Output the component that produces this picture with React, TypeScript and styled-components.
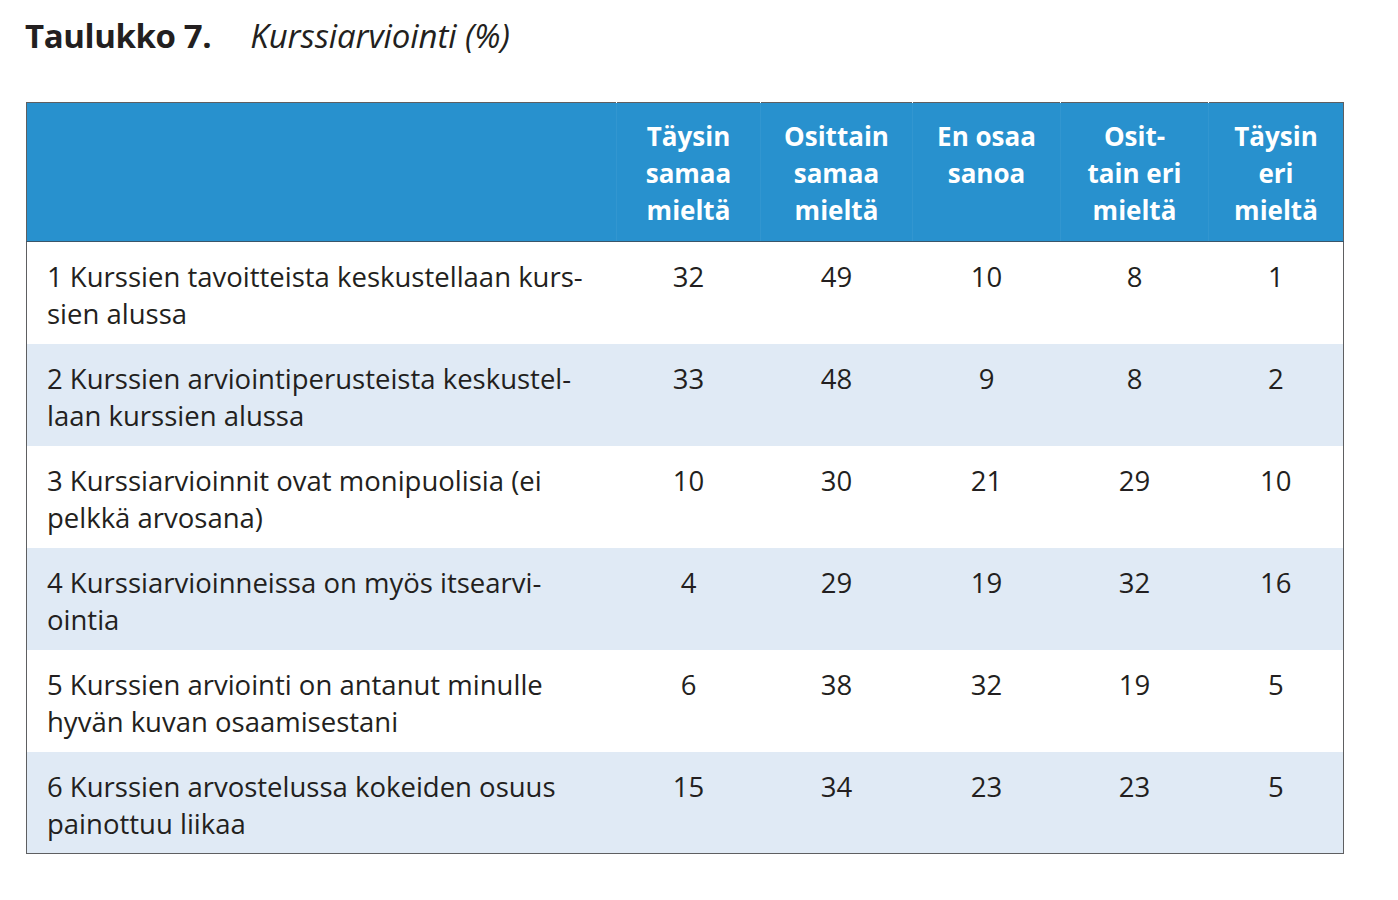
import { createGlobalStyle, styled } from 'styled-components';
import * as React from 'react';

const GlobalStyle = createGlobalStyle`
  html, body {
    margin: 0;
    padding: 0;
    background: #ffffff;
  }
  body {
    font-family: 'Open Sans', 'Noto Sans', sans-serif;
    color: #231f20;
  }
`;

interface IRow {
  label: string;
  values: number[];
}

const headers = ['Täysin\nsamaa\nmieltä', 'Osittain\nsamaa\nmieltä', 'En osaa\nsanoa', 'Osit-\ntain eri\nmieltä', 'Täysin\neri\nmieltä'];

const rows: IRow[] = [
  { label: '1 Kurssien tavoitteista keskustellaan kurs-\nsien alussa', values: [32, 49, 10, 8, 1] },
  { label: '2 Kurssien arviointiperusteista keskustel-\nlaan kurssien alussa', values: [33, 48, 9, 8, 2] },
  { label: '3 Kurssiarvioinnit ovat monipuolisia (ei\npelkkä arvosana)', values: [10, 30, 21, 29, 10] },
  { label: '4 Kurssiarvioinneissa on myös itsearvi-\nointia', values: [4, 29, 19, 32, 16] },
  { label: '5 Kurssien arviointi on antanut minulle\nhyvän kuvan osaamisestani', values: [6, 38, 32, 19, 5] },
  { label: '6 Kurssien arvostelussa kokeiden osuus\npainottuu liikaa', values: [15, 34, 23, 23, 5] },
];

const columnWidths = [590, 144, 152, 148, 148, 135];

const App: React.FC = () => {
  return (
    <Page>
      <GlobalStyle />
      <Title>
        <TitleNumber>Taulukko 7.</TitleNumber>
        <TitleName>Kurssiarviointi (%)</TitleName>
      </Title>
      <Table>
        <colgroup>
          {columnWidths.map((w, i) => (
            <col key={i} style={{ width: w }} />
          ))}
        </colgroup>
        <thead>
          <tr>
            <HeadCell />
            {headers.map((h) => (
              <HeadCell key={h} $divided>
                {h}
              </HeadCell>
            ))}
          </tr>
        </thead>
        <tbody>
          {rows.map((row, i) => (
            <BodyRow key={row.label} $striped={i % 2 === 1}>
              <LabelCell>{row.label}</LabelCell>
              {row.values.map((v, j) => (
                <ValueCell key={j}>{v}</ValueCell>
              ))}
            </BodyRow>
          ))}
        </tbody>
      </Table>
    </Page>
  );
};

const Page = styled.div`
  padding: 15px 0 0 26px;
  width: 1317px;
`;

const Title = styled.h1`
  margin: 0 0 45px -1px;
  display: flex;
  gap: 39px;
  font-size: 33px;
  line-height: 42px;
  font-weight: 400;
  color: #231f20;
`;

const TitleNumber = styled.span`
  font-weight: 700;
  letter-spacing: -0.4px;
`;

const TitleName = styled.span`
  font-style: italic;
  letter-spacing: -0.1px;
`;

const Table = styled.table`
  width: 1317px;
  border-collapse: collapse;
  table-layout: fixed;
  border: 1px solid #5e5f61;
`;

const HeadCell = styled.th<{ $divided?: boolean }>`
  background: #2891ce;
  color: #ffffff;
  font-size: 26px;
  line-height: 37px;
  font-weight: 700;
  white-space: pre-line;
  text-align: center;
  vertical-align: top;
  padding: 15px 0 12px;
  border-bottom: 1px solid #3a5569;
  border-left: ${({ $divided }) => ($divided ? '1px solid rgba(255, 255, 255, 0.05)' : 'none')};
`;

const BodyRow = styled.tr<{ $striped: boolean }>`
  background: ${({ $striped }) => ($striped ? '#e0eaf5' : '#ffffff')};
  height: 102px;
`;

const LabelCell = styled.td`
  font-size: 27.5px;
  line-height: 37px;
  white-space: pre-line;
  vertical-align: top;
  padding: 16px 0 0 20px;
`;

const ValueCell = styled.td`
  font-size: 27.5px;
  line-height: 37px;
  text-align: center;
  vertical-align: top;
  padding: 16px 0 0;
`;

export default App;
